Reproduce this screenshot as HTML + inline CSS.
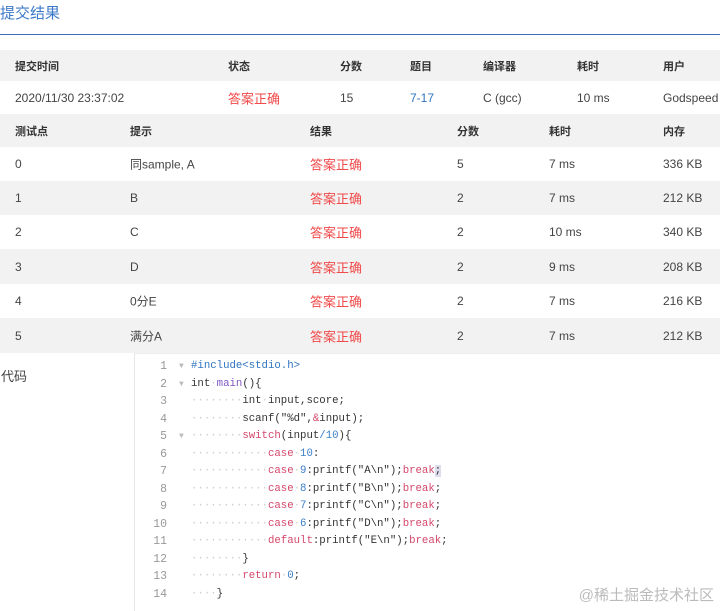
<!DOCTYPE html>
<html><head><meta charset="utf-8"><style>
body{margin:0;width:720px;height:610px;overflow:hidden;background:#fff;font-family:"Liberation Sans","Noto Sans CJK SC",sans-serif;font-size:12px;color:#444;position:relative}
.t{position:absolute;left:0;top:2px;font-size:15px;color:#3c78c8}
.line{position:absolute;left:0;top:34px;width:720px;height:1px;background:#3c6fb5}
.row{position:absolute;left:0;width:720px}
.g{background:#f2f2f2}
.row span{position:absolute;top:50%;transform:translateY(-50%);white-space:nowrap}
.h span{font-weight:bold;font-size:11px;color:#333}
.r{color:#f04a4a;font-size:13px}
.b{color:#2f74c0}
.code{position:absolute;left:134px;top:353px;width:586px;height:257px;border-left:1px solid #e6e6e6;border-top:1px solid #eee;font-family:"Liberation Mono",monospace;font-size:10.7px}
.cl{position:absolute;left:0;height:17.5px;line-height:17.5px;white-space:pre}
.n{position:absolute;width:32px;text-align:right;color:#999;font-size:11.5px}
.c{position:absolute;left:56px;color:#333}
.d{color:#ccc}.k{color:#d4476b}.m{color:#3b7fc7}.p{color:#7e57c2}.inc{color:#2f74c0}
.ar{position:absolute;left:44px;color:#bbb;font-size:8px}
</style></head><body>
<div class="t">提交结果</div><div class="line"></div>
<div class="row g h" style="top:50px;height:31px"><span style="left:15px">提交时间</span><span style="left:228px">状态</span><span style="left:340px">分数</span><span style="left:410px">题目</span><span style="left:483px">编译器</span><span style="left:577px">耗时</span><span style="left:663px">用户</span></div>
<div class="row" style="top:81px;height:33px"><span style="left:15px">2020/11/30 23:37:02</span><span class="r" style="left:228px">答案正确</span><span style="left:340px">15</span><span class="b" style="left:410px">7-17</span><span style="left:483px">C (gcc)</span><span style="left:577px">10 ms</span><span style="left:663px">Godspeed</span></div>
<div class="row g h" style="top:114px;height:33px"><span style="left:15px">测试点</span><span style="left:130px">提示</span><span style="left:310px">结果</span><span style="left:457px">分数</span><span style="left:549px">耗时</span><span style="left:663px">内存</span></div>
<div class="row" style="top:147px;height:34px"><span style="left:15px">0</span><span style="left:130px">同sample, A</span><span class="r" style="left:310px">答案正确</span><span style="left:457px">5</span><span style="left:549px">7 ms</span><span style="left:663px">336 KB</span></div>
<div class="row g" style="top:181px;height:34px"><span style="left:15px">1</span><span style="left:130px">B</span><span class="r" style="left:310px">答案正确</span><span style="left:457px">2</span><span style="left:549px">7 ms</span><span style="left:663px">212 KB</span></div>
<div class="row" style="top:215px;height:34px"><span style="left:15px">2</span><span style="left:130px">C</span><span class="r" style="left:310px">答案正确</span><span style="left:457px">2</span><span style="left:549px">10 ms</span><span style="left:663px">340 KB</span></div>
<div class="row g" style="top:249px;height:35px"><span style="left:15px">3</span><span style="left:130px">D</span><span class="r" style="left:310px">答案正确</span><span style="left:457px">2</span><span style="left:549px">9 ms</span><span style="left:663px">208 KB</span></div>
<div class="row" style="top:284px;height:34px"><span style="left:15px">4</span><span style="left:130px">0分E</span><span class="r" style="left:310px">答案正确</span><span style="left:457px">2</span><span style="left:549px">7 ms</span><span style="left:663px">216 KB</span></div>
<div class="row g" style="top:318px;height:35px"><span style="left:15px">5</span><span style="left:130px">满分A</span><span class="r" style="left:310px">答案正确</span><span style="left:457px">2</span><span style="left:549px">7 ms</span><span style="left:663px">212 KB</span></div>
<div style="position:absolute;left:1px;top:366px;font-size:13px">代码</div>
<div class="code">
<div class="cl" style="top:4px"><span class="n">1</span><span class="ar">▼</span><span class="c inc">#include&lt;stdio.h&gt;</span></div>
<div class="cl" style="top:21.5px"><span class="n">2</span><span class="ar">▼</span><span class="c">int<span class="d">·</span><span class="p">main</span>(){</span></div>
<div class="cl" style="top:39px"><span class="n">3</span><span class="c"><span class="d">········</span>int<span class="d">·</span>input,score;</span></div>
<div class="cl" style="top:56.5px"><span class="n">4</span><span class="c"><span class="d">········</span>scanf("%d",<span class="k">&amp;</span>input);</span></div>
<div class="cl" style="top:74px"><span class="n">5</span><span class="ar">▼</span><span class="c"><span class="d">········</span><span class="k">switch</span>(input<span class="m">/10</span>){</span></div>
<div class="cl" style="top:91.5px"><span class="n">6</span><span class="c"><span class="d">············</span><span class="k">case</span><span class="d">·</span><span class="m">10</span>:</span></div>
<div class="cl" style="top:109px"><span class="n">7</span><span class="c"><span class="d">············</span><span class="k">case</span><span class="d">·</span><span class="m">9</span>:printf("A\n");<span class="k">break</span><span style="background:#dde">;</span></span></div>
<div class="cl" style="top:126.5px"><span class="n">8</span><span class="c"><span class="d">············</span><span class="k">case</span><span class="d">·</span><span class="m">8</span>:printf("B\n");<span class="k">break</span>;</span></div>
<div class="cl" style="top:144px"><span class="n">9</span><span class="c"><span class="d">············</span><span class="k">case</span><span class="d">·</span><span class="m">7</span>:printf("C\n");<span class="k">break</span>;</span></div>
<div class="cl" style="top:161.5px"><span class="n">10</span><span class="c"><span class="d">············</span><span class="k">case</span><span class="d">·</span><span class="m">6</span>:printf("D\n");<span class="k">break</span>;</span></div>
<div class="cl" style="top:179px"><span class="n">11</span><span class="c"><span class="d">············</span><span class="k">default</span>:printf("E\n");<span class="k">break</span>;</span></div>
<div class="cl" style="top:196.5px"><span class="n">12</span><span class="c"><span class="d">········</span>}</span></div>
<div class="cl" style="top:214px"><span class="n">13</span><span class="c"><span class="d">········</span><span class="k">return</span><span class="d">·</span><span class="m">0</span>;</span></div>
<div class="cl" style="top:231.5px"><span class="n">14</span><span class="c"><span class="d">····</span>}</span></div>
</div>
<div style="position:absolute;right:6px;top:584px;font-size:15px;color:#bbb">@稀土掘金技术社区</div>
</body></html>
